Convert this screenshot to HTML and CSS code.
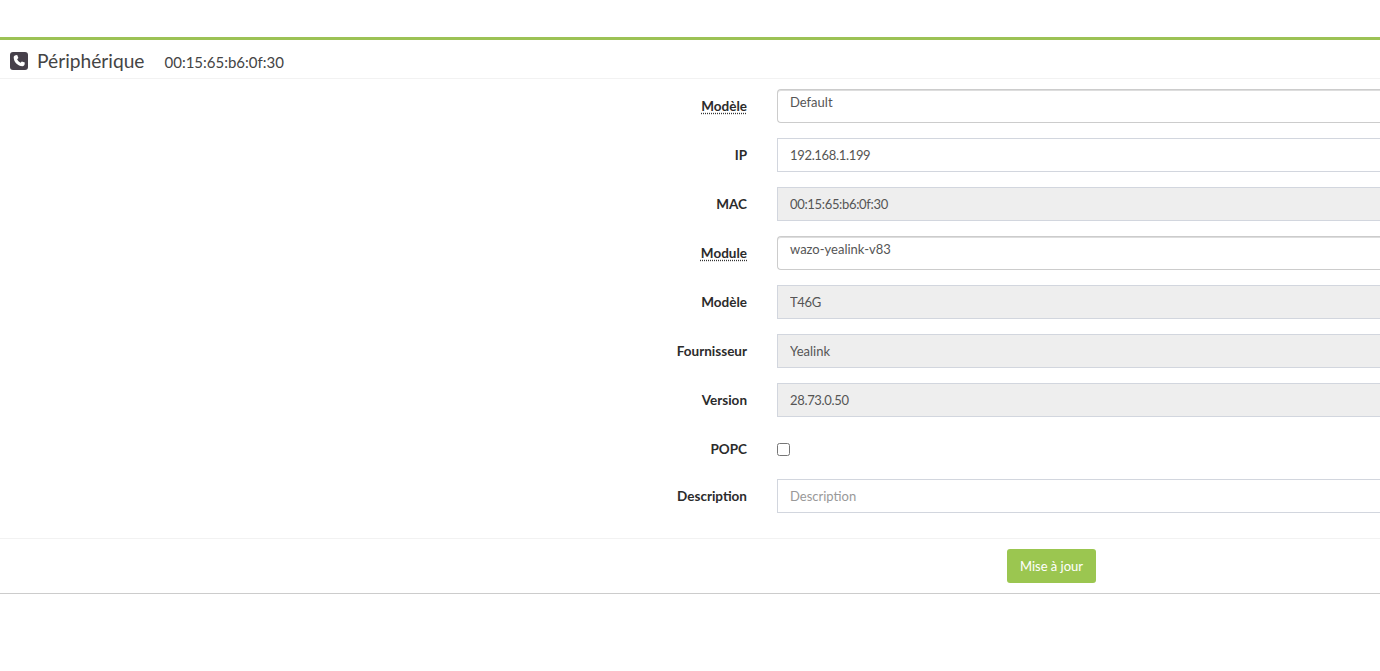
FILE: index.html
```html
<!DOCTYPE html>
<html lang="fr">
<head>
<meta charset="utf-8">
<title>Périphérique</title>
<link rel="stylesheet" href="styles.css">
</head>
<body>
<section class="card">
  <header class="card-header">
    <svg class="icon" viewBox="0 0 18 18" width="18" height="18" aria-hidden="true">
      <rect width="18" height="18" rx="3" fill="#46404a"/>
      <path fill="#fff" d="M5.6 3.2 7.2 3l1.2 3-1.300 1.200c.7 1.500 1.900 2.700 3.500 3.500L11.800 9.400l3 1.200-.2 1.700c-.1.900-.9 1.900-2.100 1.900C7.800 14.200 3.700 10 3.700 5.300c0-1.100.9-2 1.900-2.100Z"/>
    </svg>
    <h1 class="title">Périphérique</h1>
    <span class="subtitle">00:15:65:b6:0f:30</span>
  </header>
  <form class="form">
    <div class="row">
      <label class="label hint">Modèle</label>
      <div class="control select">Default</div>
    </div>
    <div class="row">
      <label class="label">IP</label>
      <input class="control num" type="text" value="192.168.1.199">
    </div>
    <div class="row">
      <label class="label">MAC</label>
      <input class="control num" type="text" value="00:15:65:b6:0f:30" disabled>
    </div>
    <div class="row">
      <label class="label hint">Module</label>
      <div class="control select">wazo-yealink-v83</div>
    </div>
    <div class="row">
      <label class="label">Modèle</label>
      <input class="control num" type="text" value="T46G" disabled>
    </div>
    <div class="row">
      <label class="label">Fournisseur</label>
      <input class="control" type="text" value="Yealink" disabled>
    </div>
    <div class="row">
      <label class="label">Version</label>
      <input class="control num" type="text" value="28.73.0.50" disabled>
    </div>
    <div class="row row-check">
      <label class="label">POPC</label>
      <input class="check" type="checkbox">
    </div>
    <div class="row">
      <label class="label">Description</label>
      <input class="control" type="text" placeholder="Description">
    </div>
  </form>
  <footer class="card-footer">
    <button class="btn" type="button">Mise à jour</button>
  </footer>
</section>
</body>
</html>
```
FILE: styles.css
```css
* { box-sizing: border-box; }
html, body { margin: 0; height: 100%; overflow: hidden; background: #fff; }
body {
  padding-top: 37px;
  font-family: "Lato", "Open Sans", sans-serif;
  font-size: 13px;
  color: #444;
}
.card {
  border-top: 3px solid #9cc255;
  border-bottom: 1px solid #ccc;
  height: 557px;
  overflow: hidden;
}
.card-header {
  display: flex;
  align-items: center;
  height: 39px;
  padding-left: 10px;
  border-bottom: 1px solid #f2f2f2;
}
.icon { flex: none; margin: 4px 9px 0 0; }
.title { margin: 2px 20px 0 0; font-size: 19.2px; font-weight: 400; color: #444; }
.subtitle { margin-top: 6px; font-size: 15px; color: #444; }
.form {
  display: flex;
  flex-direction: column;
  gap: 15px;
  padding: 10px 0 25px;
  border-bottom: 1px solid #f2f2f2;
}
.row { display: flex; align-items: center; gap: 30px; height: 34px; }
.row-check { height: 32px; padding-top: 2px; }
.label {
  flex: none;
  width: 747px;
  font-size: 13.5px;
  font-weight: 700;
  text-align: right;
  color: #2b2b2b;
}
.hint { text-decoration: underline dotted #333; text-underline-offset: 2px; }
.control {
  flex: none;
  width: 800px;
  height: 34px;
  padding: 0 12px;
  border: 1px solid #d2d6de;
  border-right: 0;
  background: #fff;
  font: inherit;
  color: #555;
  outline: none;
}
.num { letter-spacing: -0.33px; }
.control:disabled { background: #eee; color: #555; opacity: 1; }
.control::placeholder { color: #999; opacity: 1; }
.select {
  padding-top: 4px;
  border-color: #ccc;
  border-top-left-radius: 4px;
  border-bottom-left-radius: 4px;
  box-shadow: inset 0 1px 0 #ddd;
}
.check { margin: 0; width: 13px; height: 13px; flex: none; }
.card-footer { display: flex; padding: 10px 0 0 1007px; }
.btn {
  width: 89px;
  height: 34px;
  border: 0;
  border-radius: 3px;
  background: #9bc650;
  color: #fff;
  font: inherit;
}
```
